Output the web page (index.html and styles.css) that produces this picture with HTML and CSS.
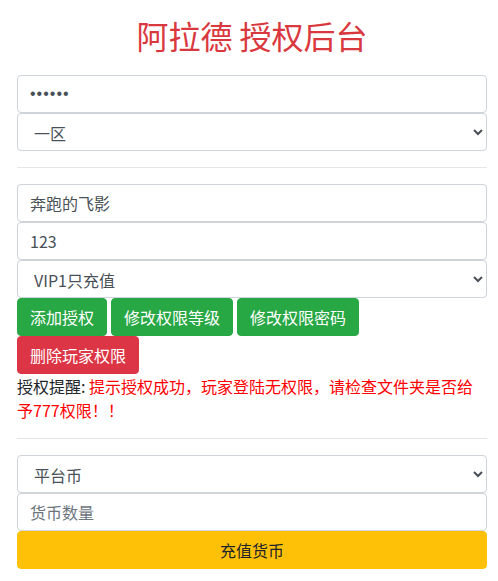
FILE: index.html
```html
<!DOCTYPE html>
<html lang="zh-CN">
<head>
<meta charset="utf-8">
<title>阿拉德 授权后台</title>
<link rel="stylesheet" href="styles.css">
</head>
<body>
<div class="container">
  <h2 class="title">阿拉德 授权后台</h2>
  <input class="form-control pwd" type="password" value="123456">
  <select class="form-control">
    <option>一区</option>
    <option>二区</option>
  </select>
  <hr class="divider">
  <input class="form-control" type="text" value="奔跑的飞影">
  <input class="form-control" type="text" value="123">
  <select class="form-control">
    <option>VIP1只充值</option>
  </select>
  <div class="btn-row">
    <button class="btn btn-success">添加授权</button>
    <button class="btn btn-success">修改权限等级</button>
    <button class="btn btn-success">修改权限密码</button>
  </div>
  <div class="btn-row">
    <button class="btn btn-danger">删除玩家权限</button>
  </div>
  <div class="notice">授权提醒: <span class="notice-msg">提示授权成功，玩家登陆无权限，请检查文件夹是否给予777权限！！</span></div>
  <hr class="divider">
  <select class="form-control">
    <option>平台币</option>
  </select>
  <input class="form-control" type="text" placeholder="货币数量">
  <button class="btn btn-warning btn-block">充值货币</button>
</div>
</body>
</html>
```

FILE: styles.css
```css
* { box-sizing: border-box; }
html, body {
  margin: 0;
  background: #fff;
}
body {
  font-family: "Noto Sans CJK SC", "Liberation Sans", sans-serif;
  font-size: 16px;
  line-height: 1.5;
  color: #212529;
}
.container {
  padding: 0 11px 0 17px;
}
.title {
  margin: 16px 0 21px;
  font-size: 32px;
  font-weight: 400;
  line-height: 38px;
  text-align: center;
  color: #d9383e;
}
.form-control {
  display: block;
  width: 100%;
  height: 38px;
  margin: 0;
  padding: 6px 12px;
  font-family: inherit;
  font-size: 16px;
  line-height: 1.5;
  color: #495057;
  background: #fff;
  border: 1px solid #ced4da;
  border-radius: 4px;
}
.pwd {
  font-family: "Liberation Sans", sans-serif;
  letter-spacing: 1px;
}
.form-control::placeholder {
  color: #6c757d;
  opacity: 1;
}
.divider {
  margin: 16px 0;
  border: 0;
  border-top: 1px solid rgba(0,0,0,.1);
  height: 0;
}
.btn-row {
  display: flex;
  column-gap: 4px;
}
.btn {
  display: inline-block;
  height: 38px;
  padding: 6px 12px;
  font-family: inherit;
  font-size: 16px;
  line-height: 1.5;
  border: 1px solid transparent;
  border-radius: 4px;
  cursor: pointer;
}
.btn-success {
  color: #fff;
  background: #28a745;
  border-color: #28a745;
}
.btn-danger {
  color: #fff;
  background: #dc3545;
  border-color: #dc3545;
}
.btn-warning {
  color: #212529;
  background: #ffc107;
  border-color: #ffc107;
}
.btn-block {
  display: block;
  width: 100%;
}
.notice {
  line-height: 24px;
  color: #212529;
}
.notice-msg {
  color: #ff0000;
}
```
